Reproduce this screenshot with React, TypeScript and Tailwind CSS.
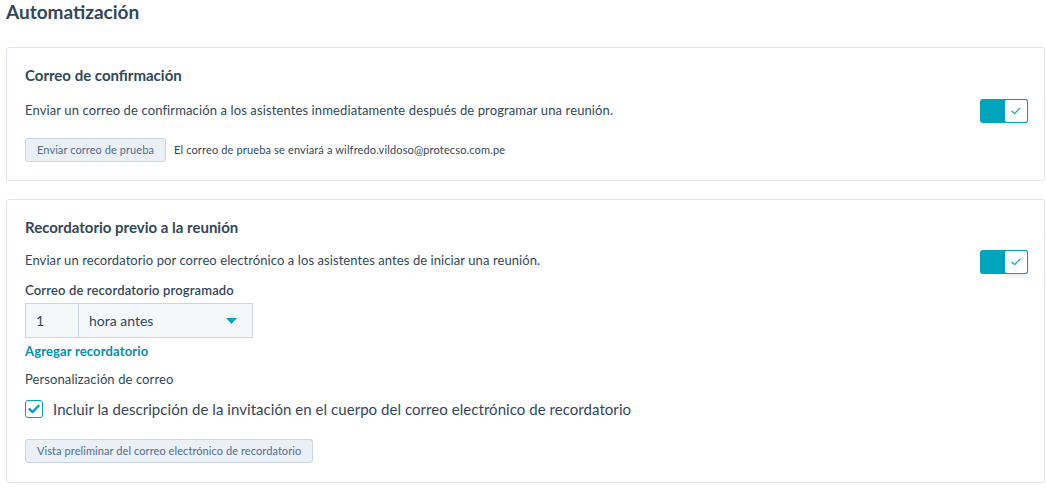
import { useState } from 'react';

const font = { fontFamily: 'Lato, "Open Sans", sans-serif' };

// Teal toggle with check knob
const Toggle = ({ on, onChange }: { on: boolean; onChange: () => void }) => (
  <button
    onClick={onChange}
    className={`relative flex h-6 w-12 items-center rounded-[3px] ${on ? 'bg-[#00a4bd]' : 'bg-[#cbd6e2]'}`}
  >
    <span
      className={`absolute top-0 flex h-6 w-6 items-center justify-center rounded-[3px] border border-[#00a4bd] bg-white shadow-[0_2px_4px_rgba(0,0,0,0.1)] ${on ? 'right-0' : 'left-0'}`}
    >
      {on && (
        <svg width="10" height="8" viewBox="0 0 10 8" fill="none">
          <path d="M1 4.2 3.6 6.6 9 1.2" stroke="#00a4bd" strokeWidth="1.2" strokeLinecap="round" strokeLinejoin="round" />
        </svg>
      )}
    </span>
  </button>
);

const SmallButton = ({ children }: { children: React.ReactNode }) => (
  <button className="h-6 rounded-[3px] border border-[#cbd6e2] bg-[#eaf0f6] px-[11px] text-[11px] tracking-[0.08px] text-[#506e91]">
    {children}
  </button>
);

export default function App() {
  const [confirm, setConfirm] = useState(true);
  const [reminder, setReminder] = useState(true);
  const [includeDesc, setIncludeDesc] = useState(true);

  return (
    <div className="min-h-screen bg-white pl-[6px] pr-px text-[#33475b]" style={font}>
      <h1 className="pt-[1px] text-[19px] font-bold leading-[22px]">Automatización</h1>

      {/* Confirmation email */}
      <section className="mt-[24px] rounded-[3px] border border-[#dfe3eb] px-[18px] pt-[17px] pb-[18px]">
        <h2 className="text-[15px] font-bold leading-[20px]">Correo de confirmación</h2>
        <div className="mt-[14px] flex items-center justify-between">
          <p className="mb-[3px] text-[13px] leading-[16px] tracking-[0.12px]">
            Enviar un correo de confirmación a los asistentes inmediatamente después de programar una reunión.
          </p>
          <div className="mr-[-2px]">
            <Toggle on={confirm} onChange={() => setConfirm(!confirm)} />
          </div>
        </div>
        <div className="mt-[15px] flex items-center gap-[8px]">
          <SmallButton>Enviar correo de prueba</SmallButton>
          <span className="text-[11px] tracking-[0.15px]">El correo de prueba se enviará a wilfredo.vildoso@protecso.com.pe</span>
        </div>
      </section>

      {/* Reminder email */}
      <section className="mt-[18px] rounded-[3px] border border-[#dfe3eb] px-[18px] pt-[17px] pb-[19px]">
        <h2 className="text-[15px] font-bold leading-[20px]">Recordatorio previo a la reunión</h2>
        <div className="mt-[13px] flex items-center justify-between">
          <p className="mb-[4px] text-[13px] leading-[16px] tracking-[0.08px]">
            Enviar un recordatorio por correo electrónico a los asistentes antes de iniciar una reunión.
          </p>
          <div className="mr-[-2px]">
            <Toggle on={reminder} onChange={() => setReminder(!reminder)} />
          </div>
        </div>
        <div className="mt-[7px] text-[13px] font-semibold leading-[18px] tracking-[0.15px]">Correo de recordatorio programado</div>
        <div className="mt-[4px] flex h-[35px] w-[228px] border border-[#cbd6e2] bg-[#f5f8fa] text-[14px]">
          <div className="flex w-[53px] items-center border-r border-[#cbd6e2] pl-[10px]">1</div>
          <div className="flex flex-1 items-center justify-between pl-[10px] pr-[15px]">
            <span>hora antes</span>
            <svg width="11" height="6" viewBox="0 0 11 6">
              <path d="M0 0h11L5.5 6z" fill="#00a4bd" />
            </svg>
          </div>
        </div>
        <button className="mt-[4px] block text-[13px] font-bold leading-[18px] tracking-[0.15px] text-[#0091ae]">Agregar recordatorio</button>
        <div className="mt-[10px] text-[13px] leading-[18px] tracking-[0.1px]">Personalización de correo</div>
        <label className="mt-[11px] flex items-center gap-[10px]">
          <span
            onClick={() => setIncludeDesc(!includeDesc)}
            className="flex h-[18px] w-[18px] items-center justify-center rounded-[3px] border border-[#00a4bd] bg-white"
          >
            {includeDesc && (
              <svg width="12" height="10" viewBox="0 0 12 10" fill="none">
                <path d="M1.5 5.2 4.6 8 10.5 1.8" stroke="#00a4bd" strokeWidth="2.4" strokeLinecap="round" strokeLinejoin="round" />
              </svg>
            )}
          </span>
          <span className="text-[15px] leading-[20px] tracking-[0.05px]">
            Incluir la descripción de la invitación en el cuerpo del correo electrónico de recordatorio
          </span>
        </label>
        <div className="mt-[18px]">
          <SmallButton>Vista preliminar del correo electrónico de recordatorio</SmallButton>
        </div>
      </section>
    </div>
  );
}
